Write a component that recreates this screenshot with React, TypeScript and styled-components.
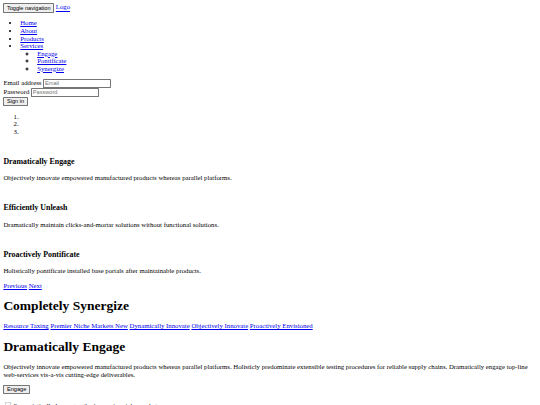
import React from "react";
import styled, { createGlobalStyle } from "styled-components";

const GlobalStyle = createGlobalStyle`
  html, body {
    margin: 0;
    padding: 0;
    background: #fff;
  }
`;

// the whole page is drawn at 1280px and shrunk to fit the 540px window
const Page = styled.div`
  zoom: 0.421875;
  padding: 8px;
  font-family: "Liberation Serif", "Times New Roman", serif;
  font-size: 16px;
  line-height: 1.12;
  color: #000;
`;

const Link = styled.a`
  color: #0000ee;
  text-decoration: underline;
  cursor: pointer;
`;

const Button = styled.button`
  font-family: "Liberation Sans", Arial, sans-serif;
  font-size: 13.333px;
  line-height: 1.15;
  color: #000;
  background: #efefef;
  border: 1px solid #767676;
  border-radius: 2px;
  padding: 1px 6px;
  margin: 0;
`;

const Navbar = styled.div``;

const NavList = styled.ul`
  margin: 16px 0;
  padding-left: 40px;
  list-style: disc;
`;

const SubList = styled.ul`
  margin: 0;
  padding-left: 40px;
  list-style: circle;
`;

const Form = styled.form`
  margin: 0;
`;

const Field = styled.div``;

const Input = styled.input`
  font-family: "Liberation Sans", Arial, sans-serif;
  font-size: 13.333px;
  line-height: 1.15;
  width: 153px;
  padding: 1px 2px;
  margin: 0;
  border: 1px solid #767676;
  border-radius: 2px;
  &::placeholder {
    color: #757575;
  }
`;

const Indicators = styled.ol`
  margin: 16px 0;
  padding-left: 40px;
  list-style: decimal;
`;

const Slide = styled.div``;

const SlideImage = styled.div`
  height: 18px;
`;

const SlideTitle = styled.h3`
  font-size: 18.72px;
  font-weight: bold;
  margin: 18.72px 0;
`;

const Text = styled.p`
  margin: 16px 0;
`;

const Title = styled.h1`
  font-size: 32px;
  font-weight: bold;
  margin: 21.44px 0;
`;

const Tags = styled.div``;

const Actions = styled.div``;

const ButtonRow = styled.div`
  margin-top: 5px;
`;

const CheckRow = styled.label`
  display: block;
  margin-top: 16px;
`;

const Check = styled.input`
  width: 13px;
  height: 13px;
  margin: 3px 3px 3px 4px;
  vertical-align: baseline;
`;

const slides = [
  {
    title: "Dramatically Engage",
    text: "Objectively innovate empowered manufactured products whereas parallel platforms.",
  },
  {
    title: "Efficiently Unleash",
    text: "Dramatically maintain clicks-and-mortar solutions without functional solutions.",
  },
  {
    title: "Proactively Pontificate",
    text: "Holistically pontificate installed base portals after maintainable products.",
  },
];

const tags = [
  "Resource Taxing",
  "Premier Niche Markets New",
  "Dynamically Innovate",
  "Objectively Innovate",
  "Proactively Envisioned",
];

export default function App() {
  return (
    <Page>
      <GlobalStyle />
      <Navbar>
        <Button type="button">Toggle navigation</Button> <Link>Logo</Link>
      </Navbar>
      <NavList>
        <li><Link>Home</Link></li>
        <li><Link>About</Link></li>
        <li><Link>Products</Link></li>
        <li>
          <Link>Services</Link>
          <SubList>
            <li><Link>Engage</Link></li>
            <li><Link>Pontificate</Link></li>
            <li><Link>Synergize</Link></li>
          </SubList>
        </li>
      </NavList>
      <Form onSubmit={(e) => e.preventDefault()}>
        <Field>
          Email address <Input type="email" placeholder="Email" />
        </Field>
        <Field>
          Password <Input type="password" placeholder="Password" />
        </Field>
        <Button type="submit">Sign in</Button>
      </Form>
      <Indicators>
        <li></li>
        <li></li>
        <li></li>
      </Indicators>
      {slides.map((slide) => (
        <Slide key={slide.title}>
          <SlideImage />
          <SlideTitle>{slide.title}</SlideTitle>
          <Text>{slide.text}</Text>
        </Slide>
      ))}
      <Actions>
        <Link>Previous</Link> <Link>Next</Link>
      </Actions>
      <Title>Completely Synergize</Title>
      <Tags>
        {tags.map((tag, i) => (
          <React.Fragment key={tag}>
            {i > 0 && " "}
            <Link>{tag}</Link>
          </React.Fragment>
        ))}
      </Tags>
      <Title>Dramatically Engage</Title>
      <Text>
        Objectively innovate empowered manufactured products whereas parallel
        platforms. Holisticly predominate extensible testing procedures for
        reliable supply chains. Dramatically engage top-line web-services
        vis-a-vis cutting-edge deliverables.
      </Text>
      <ButtonRow>
        <Button type="button">Engage</Button>
      </ButtonRow>
      <CheckRow>
        <Check type="checkbox" /> Synergistically leverage other's premier
        niche markets
      </CheckRow>
    </Page>
  );
}
